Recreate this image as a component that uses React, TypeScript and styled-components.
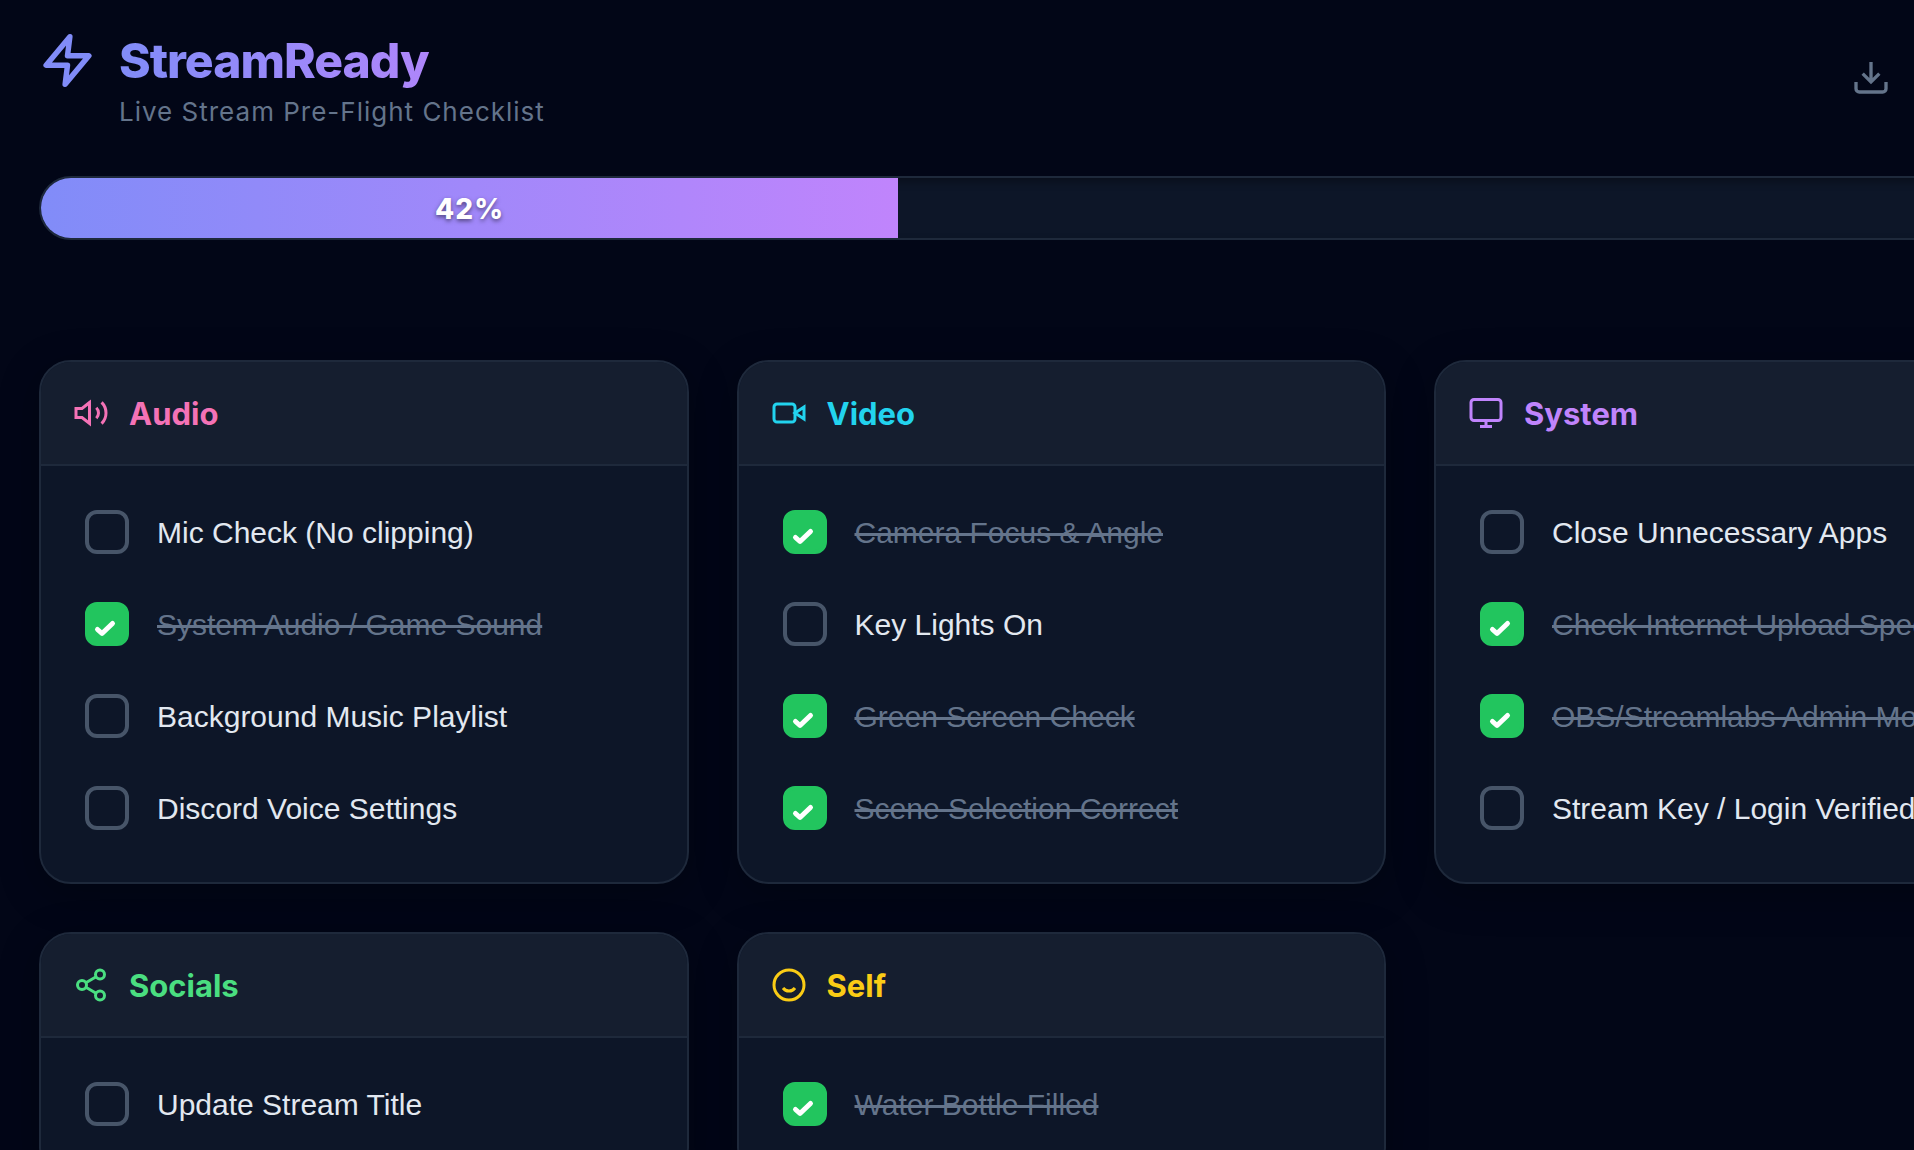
import React, { useState } from "react";
import styled, { createGlobalStyle } from "styled-components";

const GlobalStyle = createGlobalStyle`
  * { box-sizing: border-box; }
  html { scrollbar-width: none; background: #020617; }
  body {
    margin: 0;
    background: #020617;
    color: #e2e8f0;
    font-family: Inter, "Liberation Sans", sans-serif;
    overflow-x: hidden;
  }
`;

/* The board is a little wider than the window and runs off its right side. */
const Page = styled.div`
  width: 111%;
  padding: 26px 41px 40px 39px;
`;

const Header = styled.header`
  display: flex;
  justify-content: space-between;
  align-items: center;
  margin-bottom: 48px;
`;

const Brand = styled.div`
  display: flex;
  align-items: flex-start;
  gap: 23px;
`;

const BoltIcon = styled.svg`
  width: 57px;
  height: 57px;
  margin-top: 6px;
  flex: none;
`;

const Title = styled.h1`
  margin: 0;
  font-size: 48px;
  line-height: 70px;
  font-weight: 800;
  letter-spacing: -1px;
  background: linear-gradient(90deg, #818cf8, #c084fc);
  background-clip: text;
  color: transparent;
`;

const Subtitle = styled.p`
  margin: 0;
  font-size: 26px;
  line-height: 32px;
  font-weight: 400;
  letter-spacing: 1px;
  color: #64748b;
`;

const Actions = styled.div`
  display: flex;
  padding-right: 175px;
`;

const IconButton = styled.button`
  display: flex;
  padding: 18px;
  border: 0;
  border-radius: 16px;
  background: none;
  color: #64748b;
  cursor: pointer;
`;

const Track = styled.div`
  height: 64px;
  margin-bottom: 120px;
  border: 2px solid #1e293b;
  border-radius: 32px;
  background: #0d1628;
  box-shadow: inset 0 4px 8px rgba(0, 0, 0, 0.3);
  overflow: hidden;
`;

const Fill = styled.div`
  display: flex;
  align-items: center;
  justify-content: center;
  height: 100%;
  padding-top: 2px;
  background: linear-gradient(90deg, #818cf8, #c084fc);
  color: #ffffff;
  font-size: 28px;
  line-height: 32px;
  font-weight: 800;
  letter-spacing: 1px;
  text-shadow: 0 2px 4px rgba(0, 0, 0, 0.5);
`;

const Board = styled.main`
  display: grid;
  grid-template-columns: repeat(3, 1fr);
  gap: 48px;
`;

const Card = styled.section`
  border: 2px solid #1e293b;
  border-radius: 32px;
  background: #0d1628;
  box-shadow: 0 10px 40px rgba(0, 0, 0, 0.25);
  overflow: hidden;
`;

const CardHeader = styled.div<{ $color: string }>`
  display: flex;
  align-items: center;
  gap: 20px;
  padding: 33px 32px;
  border-bottom: 2px solid #1e293b;
  background: #151e2f;
  color: ${(p) => p.$color};
`;

const CardTitle = styled.h2`
  margin: 0;
  padding-top: 2px;
  font-size: 31px;
  line-height: 34px;
  font-weight: 700;
`;

const Glyph = styled.svg<{ $size: number }>`
  width: ${(p) => p.$size}px;
  height: ${(p) => p.$size}px;
  flex: none;
  fill: none;
  stroke: currentColor;
  stroke-width: 2;
`;

const List = styled.ul`
  margin: 0;
  padding: 24px;
  list-style: none;
`;

const Item = styled.li`
  margin-bottom: 8px;
`;

const ItemLabel = styled.label`
  display: flex;
  align-items: center;
  gap: 28px;
  padding: 20px;
  cursor: pointer;
`;

const CheckWrap = styled.span`
  display: grid;
  flex: none;
  width: 44px;
  height: 44px;
`;

const Checkbox = styled.input`
  grid-area: 1 / 1;
  appearance: none;
  width: 44px;
  height: 44px;
  margin: 0;
  border: 4px solid #475569;
  border-radius: 12px;
  cursor: pointer;

  &:checked {
    border-color: #22c55e;
    background: #22c55e;
  }
`;

const Tick = styled.svg`
  grid-area: 1 / 1;
  width: 44px;
  height: 44px;
  pointer-events: none;
  fill: none;
  stroke: #ffffff;
  stroke-width: 5;
  stroke-linecap: round;
  stroke-linejoin: round;
`;

const ItemText = styled.span<{ $done: boolean }>`
  padding-top: 2px;
  font-family: "Liberation Sans", Arial, sans-serif;
  font-size: 30px;
  line-height: 42px;
  white-space: nowrap;
  color: ${(p) => (p.$done ? "#64748b" : "#e2e8f0")};
  text-decoration: ${(p) => (p.$done ? "line-through" : "none")};
  text-decoration-thickness: 3px;
`;

type Task = { text: string; done: boolean };
type Group = { name: string; color: string; icon: React.ReactNode; tasks: Task[] };

const GROUPS: Group[] = [
  {
    name: "Audio",
    color: "#f472b6",
    icon: (
      <>
        <polygon points="11 5 6 9 2 9 2 15 6 15 11 19 11 5" />
        <path d="M15.54 8.46a5 5 0 0 1 0 7.07" />
        <path d="M19.07 4.93a10 10 0 0 1 0 14.14" />
      </>
    ),
    tasks: [
      { text: "Mic Check (No clipping)", done: false },
      { text: "System Audio / Game Sound", done: true },
      { text: "Background Music Playlist", done: false },
      { text: "Discord Voice Settings", done: false },
    ],
  },
  {
    name: "Video",
    color: "#22d3ee",
    icon: (
      <>
        <path d="m22 8-6 4 6 4V8Z" />
        <rect x="2" y="6" width="14" height="12" rx="2" />
      </>
    ),
    tasks: [
      { text: "Camera Focus & Angle", done: true },
      { text: "Key Lights On", done: false },
      { text: "Green Screen Check", done: true },
      { text: "Scene Selection Correct", done: true },
    ],
  },
  {
    name: "System",
    color: "#c084fc",
    icon: (
      <>
        <rect x="2" y="3" width="20" height="14" rx="2" />
        <path d="M8 21h8M12 17v4" />
      </>
    ),
    tasks: [
      { text: "Close Unnecessary Apps", done: false },
      { text: "Check Internet Upload Speed", done: true },
      { text: "OBS/Streamlabs Admin Mode", done: true },
      { text: "Stream Key / Login Verified", done: false },
    ],
  },
  {
    name: "Socials",
    color: "#4ade80",
    icon: (
      <>
        <circle cx="18" cy="5" r="3" />
        <circle cx="6" cy="12" r="3" />
        <circle cx="18" cy="19" r="3" />
        <path d="M8.59 13.51l6.83 3.98M15.41 6.51l-6.82 3.98" />
      </>
    ),
    tasks: [{ text: "Update Stream Title", done: false }],
  },
  {
    name: "Self",
    color: "#facc15",
    icon: (
      <>
        <circle cx="12" cy="12" r="10" />
        <path d="M8 14s1.5 2 4 2 4-2 4-2" />
      </>
    ),
    tasks: [{ text: "Water Bottle Filled", done: true }],
  },
];

const PROGRESS = 42;

function TaskRow({ task }: { task: Task }) {
  const [done, setDone] = useState(task.done);
  return (
    <Item>
      <ItemLabel>
        <CheckWrap>
          <Checkbox type="checkbox" checked={done} onChange={() => setDone(!done)} />
          {done && (
            <Tick viewBox="0 0 44 44" aria-hidden="true">
              <path d="M12.5 27.5l4.5 4L27.5 21.5" />
            </Tick>
          )}
        </CheckWrap>
        <ItemText $done={done}>{task.text}</ItemText>
      </ItemLabel>
    </Item>
  );
}

export default function App() {
  return (
    <>
      <GlobalStyle />
      <Page>
        <Header>
          <Brand>
            <BoltIcon viewBox="0 0 24 24" aria-hidden="true">
              <path
                d="M13 2L3 14h9l-1 8 10-12h-9l1-8z"
                fill="none"
                stroke="#818cf8"
                strokeWidth="2.3"
                strokeLinecap="round"
                strokeLinejoin="round"
              />
            </BoltIcon>
            <div>
              <Title>StreamReady</Title>
              <Subtitle>Live Stream Pre-Flight Checklist</Subtitle>
            </div>
          </Brand>
          <Actions>
            <IconButton type="button" aria-label="Download">
              <Glyph $size={40} viewBox="0 0 24 24" aria-hidden="true">
                <path d="M21 15v4a2 2 0 0 1-2 2H5a2 2 0 0 1-2-2v-4" />
                <path d="M7 10l5 5 5-5M12 15V3" />
              </Glyph>
            </IconButton>
          </Actions>
        </Header>

        <Track role="progressbar" aria-valuenow={PROGRESS} aria-valuemin={0} aria-valuemax={100}>
          <Fill style={{ width: `${PROGRESS}%` }}>{PROGRESS}%</Fill>
        </Track>

        <Board>
          {GROUPS.map((group) => (
            <Card key={group.name}>
              <CardHeader $color={group.color}>
                <Glyph $size={36} viewBox="0 0 24 24" aria-hidden="true">
                  {group.icon}
                </Glyph>
                <CardTitle>{group.name}</CardTitle>
              </CardHeader>
              <List>
                {group.tasks.map((task) => (
                  <TaskRow key={task.text} task={task} />
                ))}
              </List>
            </Card>
          ))}
        </Board>
      </Page>
    </>
  );
}
